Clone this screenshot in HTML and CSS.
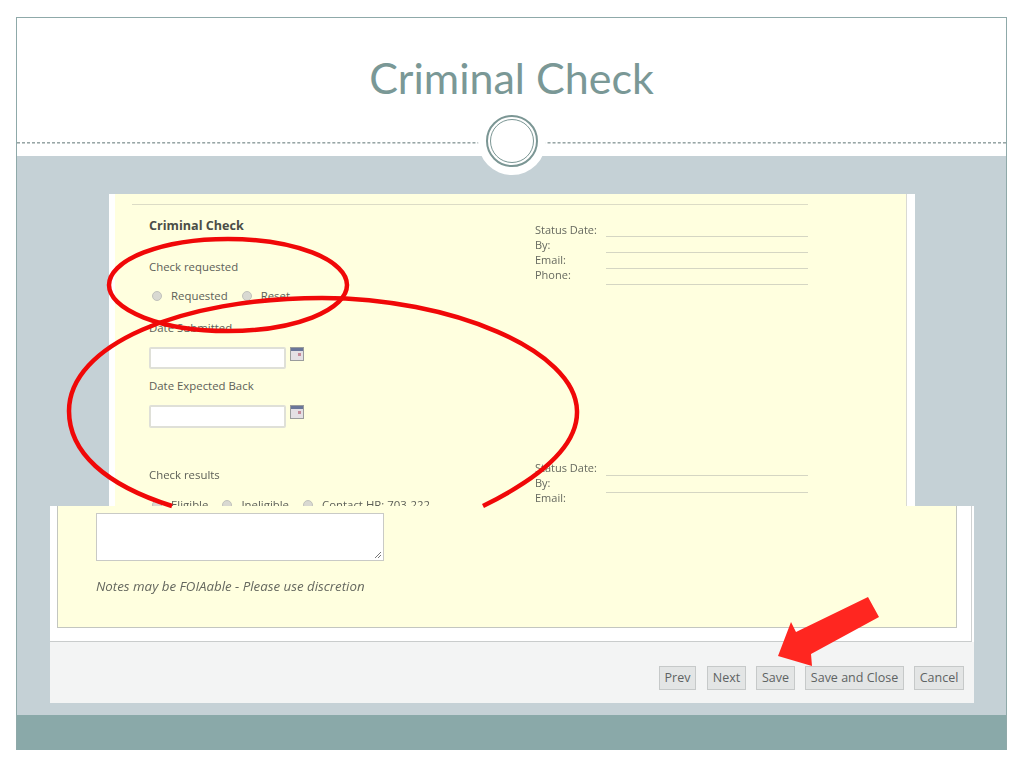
FILE: index.html
```html
<!DOCTYPE html>
<html lang="en">
<head>
<meta charset="utf-8">
<title>Criminal Check</title>
<link rel="stylesheet" href="styles.css">
</head>
<body>
<div class="slide">
  <header class="slide-head">
    <h1 class="slide-title">Criminal Check</h1>
    <div class="dash"></div>
    <div class="blob"><div class="ring"><div class="ring-inner"></div></div></div>
  </header>
  <main class="slide-body">
    <section class="shot-top">
      <div class="shot-top-cream">
        <div class="rule"></div>
        <div class="cols">
          <div class="col-left">
            <h2 class="form-title">Criminal Check</h2>
            <div class="label label-req">Check requested</div>
            <div class="radios radios-req">
              <span class="radio"></span><span class="opt">Requested</span>
              <span class="radio"></span><span class="opt">Reset</span>
            </div>
            <div class="label label-sub">Date Submitted</div>
            <div class="date-row">
              <div class="input"></div>
              <svg class="cal" viewBox="0 0 14 14"><rect x=".5" y=".5" width="13" height="13" fill="#e4e0e4" stroke="#9a9c9c"/><rect x="1" y="1" width="12" height="3" fill="#6a7699"/><rect x="8" y="6" width="3" height="3" fill="#c58a98"/></svg>
            </div>
            <div class="label label-exp">Date Expected Back</div>
            <div class="date-row">
              <div class="input input-tall"></div>
              <svg class="cal" viewBox="0 0 14 14"><rect x=".5" y=".5" width="13" height="13" fill="#e4e0e4" stroke="#9a9c9c"/><rect x="1" y="1" width="12" height="3" fill="#6a7699"/><rect x="8" y="6" width="3" height="3" fill="#c58a98"/></svg>
            </div>
            <div class="label label-res">Check results</div>
            <div class="radios radios-res">
              <span class="radio"></span><span class="opt">Eligible</span>
              <span class="radio"></span><span class="opt">Ineligible</span>
              <span class="radio"></span><span class="opt">Contact HR: 703-222-</span>
            </div>
          </div>
          <div class="col-right">
            <div class="status">
              <div class="status-labels">
                <div>Status Date:</div><div>By:</div><div>Email:</div><div>Phone:</div>
              </div>
              <div class="status-lines">
                <div class="line"></div><div class="line"></div><div class="line"></div><div class="line"></div>
              </div>
            </div>
            <div class="status status-two">
              <div class="status-labels">
                <div>Status Date:</div><div>By:</div><div>Email:</div>
              </div>
              <div class="status-lines">
                <div class="line"></div><div class="line line-long"></div>
              </div>
            </div>
          </div>
        </div>
      </div>
    </section>
    <section class="shot-bottom">
      <div class="panel-wrap">
        <div class="panel">
          <div class="textarea">
            <svg class="grip" viewBox="0 0 8 8"><path d="M1 7 7 1M4 7 7 4" stroke="#777" fill="none"/></svg>
          </div>
          <p class="note">Notes may be FOIAable - Please use discretion</p>
        </div>
      </div>
      <div class="actions">
        <button class="btn btn-prev">Prev</button>
        <button class="btn btn-next">Next</button>
        <button class="btn btn-save">Save</button>
        <button class="btn btn-close">Save and Close</button>
        <button class="btn btn-cancel">Cancel</button>
      </div>
    </section>
  </main>
  <footer class="slide-foot"></footer>
  <svg class="marks" viewBox="0 0 1024 768">
    <ellipse cx="228" cy="285" rx="119" ry="46" fill="none" stroke="#f00808" stroke-width="4.5"/>
    <path d="M483 506C540 478 578 446 577 411C576 350 450 298 322 298C180 298 69 345 69 411C69 452 105 485 172 506" fill="none" stroke="#f00808" stroke-width="4.5"/>
    <polygon points="868,597 879,617 811,654 812,666 778,656 791,622 796,632" fill="#ff2620"/>
  </svg>
</div>
</body>
</html>
```
FILE: styles.css
```css
* { box-sizing: border-box; }
html, body { margin: 0; padding: 0; background: #fff; }
body { width: 1024px; height: 768px; padding: 17px 17px 0 16px; font-family: "Open Sans", sans-serif; color: #55584f; }
.slide { position: relative; width: 991px; height: 733px; border: 1px solid #8fa9a9; border-bottom: 0; display: flex; flex-direction: column; }
.slide-head { position: relative; height: 138px; background: #fff; flex: none; }
.slide-title { margin: 0; padding-top: 35px; text-align: center; font: 400 43px/50px Lato, "Open Sans", sans-serif; color: #7a9896; }
.dash { position: absolute; left: 0; right: 0; top: 124px; border-top: 1px dashed #98a6a6; border-bottom: 1px dashed #c4cccc; height: 2px; }
.blob { position: absolute; left: 461px; top: 89px; width: 68px; height: 68px; background: #fff; border-radius: 50%; z-index: 2; }
.ring { position: absolute; left: 8px; top: 8px; width: 52px; height: 52px; border: 2px solid #7b9694; border-radius: 50%; padding: 2px; }
.ring-inner { width: 100%; height: 100%; border: 1px solid #7b9694; border-radius: 50%; }
.slide-body { flex: 1; background: #c5d1d6; padding-top: 38px; display: flex; flex-direction: column; align-items: flex-start; }
.shot-top { margin-left: 92px; width: 806px; height: 312px; overflow: hidden; background: #fff; padding: 0 8px 0 6px; }
.shot-top-cream { height: 100%; background: #ffffdf; border-right: 1px solid #d9dad4; padding: 10px 0 0 17px; filter: blur(.4px); }
.rule { width: 676px; border-top: 1px solid #dcdcc6; }
.cols { display: flex; }
.col-left { width: 403px; padding: 12px 0 0 17px; }
.col-right { padding-top: 17px; }
.form-title { margin: 0; font-size: 12.6px; line-height: 18px; font-weight: 700; color: #4a4d47; }
.label { font-size: 11.4px; line-height: 16px; color: #5d6058; }
.label-req { margin-top: 24px; }
.radios { display: flex; align-items: center; height: 16px; white-space: nowrap; font-size: 11.4px; line-height: 16px; color: #5d6058; }
.radios-req { margin-top: 13px; }
.radio { width: 10px; height: 10px; border-radius: 50%; background: #d9d9d2; border: 1px solid #c1c2bb; margin: 0 9px 0 3px; flex: none; }
.opt { margin-right: 11px; }
.label-sub { margin-top: 16px; }
.date-row { display: flex; align-items: flex-start; gap: 4px; }
.input { width: 137px; height: 22px; background: #fff; border: 2px solid #dfe0d8; border-radius: 2px; margin-top: 11px; }
.cal { width: 14px; height: 14px; margin-top: 11px; display: block; }
.label-exp { margin-top: 9px; }
.input-tall { height: 23px; }
.label-res { margin-top: 39px; }
.radios-res { margin-top: 14px; }
.status { display: flex; font-size: 11px; line-height: 15px; color: #66695f; }
.status-labels { width: 71px; flex: none; }
.status-lines { width: 202px; margin-top: -1px; }
.line { height: 16px; border-bottom: 1px solid #d5d6c3; }
.status-two { margin-top: 175px; }
.status-two .status-lines { margin-top: 0; }
.line-long { height: 17px; }
.shot-bottom { margin-left: 33px; width: 924px; height: 197px; display: flex; flex-direction: column; background: #fff; }
.panel-wrap { width: 922px; height: 136px; background: #fff; padding-left: 7px; border-right: 1px solid #d0d2d2; border-bottom: 1px solid #c9cccc; flex: none; }
.panel { width: 900px; height: 122px; background: #ffffdf; border: 1px solid #c3c6c0; border-top: 0; padding: 7px 0 0 38px; }
.textarea { position: relative; width: 288px; height: 48px; background: #fff; border: 1px solid #c9cac6; }
.grip { position: absolute; right: 1px; bottom: 1px; width: 8px; height: 8px; display: block; }
.note { margin: 17px 0 0; font-size: 13.3px; line-height: 16px; font-style: italic; color: #65685f; filter: blur(.3px); }
.actions { flex: 1; background: #f3f4f4; display: flex; justify-content: flex-end; gap: 10px; padding: 24px 10px 0 0; align-items: flex-start; }
.btn { height: 24px; padding: 1px 0 0; background: #e3e5e5; border: 1px solid #c6c9c9; color: #5e6363; font: 12.5px/1 "Open Sans", sans-serif; }
.btn-prev { width: 37px; margin-right: 1px; }
.btn-next { width: 39px; }
.btn-save { width: 39px; }
.btn-close { width: 99px; }
.btn-cancel { width: 50px; }
.slide-foot { height: 35px; background: #8aa9a9; flex: none; }
.marks { position: absolute; left: -17px; top: -18px; width: 1024px; height: 768px; pointer-events: none; z-index: 5; }
```
